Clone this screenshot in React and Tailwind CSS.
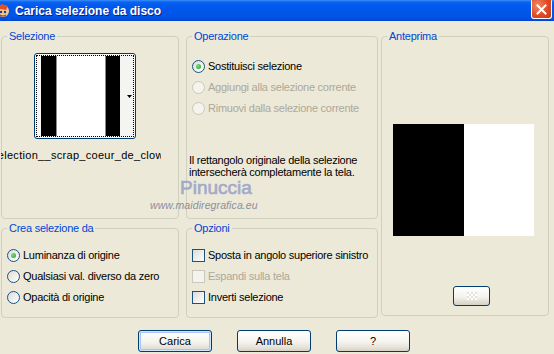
import React from 'react'

const font = "font-['Liberation_Sans',Arial,sans-serif]"

function Radio({ checked, disabled }) {
  return (
    <span
      className={
        disabled
          ? 'w-[13px] h-[13px] rounded-full border border-[#CAC8BB] bg-[#F5F4EC] flex items-center justify-center shrink-0'
          : 'w-[13px] h-[13px] rounded-full border border-[#1C5180] bg-[linear-gradient(135deg,#DCDCD7,#FFFFFF)] flex items-center justify-center shrink-0'
      }
    >
      {checked && (
        <span className="w-[5px] h-[5px] rounded-full bg-[radial-gradient(circle_at_35%_35%,#7BE07E,#21A121)]" />
      )}
    </span>
  )
}

function Check({ disabled }) {
  return (
    <span
      className={
        disabled
          ? 'w-[13px] h-[13px] border border-[#CAC8BB] bg-[#F5F4EC] shrink-0'
          : 'w-[13px] h-[13px] border border-[#1C5180] bg-[linear-gradient(135deg,#DCDCD7,#FFFFFF)] shrink-0'
      }
    />
  )
}

function Row({ control, label, disabled }) {
  return (
    <div className="h-[21px] flex items-center">
      {control}
      <span className={`ml-[3px] tracking-[-0.25px] ${disabled ? 'text-[#ACA899]' : 'text-black'}`}>{label}</span>
    </div>
  )
}

function Group({ title, className, children }) {
  return (
    <div className={`relative border border-[#D0D0BF] rounded-[4px] ${className}`}>
      <span className="absolute -top-[7px] left-[5px] px-[2px] bg-[#ECE9D8] text-[#0046D5] leading-[13px] tracking-[-0.25px]">
        {title}
      </span>
      {children}
    </div>
  )
}

function Btn({ children, isDefault, className }) {
  return (
    <button
      className={`h-[22px] border border-[#003C74] rounded-[3px] bg-[linear-gradient(#FFFFFF,#F4F3EE_55%,#E3E0D6_85%,#D6D0C5)] text-black leading-none flex items-center justify-center ${
        isDefault ? 'shadow-[inset_0_0_0_1px_#CEE7FF,inset_0_0_0_2px_#A8C4F0]' : ''
      } ${className}`}
    >
      {children}
    </button>
  )
}

function TitleIcon() {
  return (
    <svg width="16" height="16" viewBox="0 0 16 16" className="-ml-[6px] shrink-0">
      <circle cx="9" cy="8" r="6" fill="#F6C88A" />
      <path d="M3 4 L8 1 L14 3 L12 7 L6 6 Z" fill="#E0502A" />
      <circle cx="7" cy="9" r="1.2" fill="#1A3A8A" />
      <circle cx="11" cy="9" r="1.2" fill="#1A3A8A" />
      <path d="M6 12 Q9 14 12 12" stroke="#C0302A" strokeWidth="1.2" fill="none" />
      <path d="M2 13 L5 15 L4 11 Z" fill="#3FA33F" />
    </svg>
  )
}

export default function App() {
  return (
    <div className={`w-[554px] h-[354px] overflow-hidden bg-[#ECE9D8] text-[11px] ${font} relative`}>
      {/* title bar */}
      <div className="h-[21px] flex items-start bg-[linear-gradient(180deg,#3D8DF9_0%,#0863F0_10%,#0058EE_30%,#0055E7_70%,#0050E0_90%,#0042CF_100%)]">
        <div className="h-full flex items-center">
          <TitleIcon />
          <span className="ml-[5px] text-white font-bold text-[12px] [text-shadow:1px_1px_0_#0A1E8C]">
            Carica selezione da disco
          </span>
        </div>
        <div className="ml-auto mr-[2px] w-[21px] h-[19px] rounded-b-[3px] rounded-t-[1px] border border-white border-t-0 bg-[radial-gradient(circle_at_30%_30%,#F08A6A,#E04A25_55%,#C83A18)] flex items-center justify-center">
          <svg width="11" height="11" viewBox="0 0 11 11">
            <path d="M1.5 1.5 L9.5 9.5 M9.5 1.5 L1.5 9.5" stroke="#FFFFFF" strokeWidth="2" strokeLinecap="square" />
          </svg>
        </div>
      </div>

      {/* body */}
      <div className="flex pt-[15px] pl-[1px]">
        <div className="w-[178px] flex flex-col gap-[9px]">
          <Group title="Selezione" className="h-[183px]">
            <div className="pt-[16px] pl-[32px]">
              <div className="w-[102px] h-[86px] border border-[#003C74] rounded-[3px] bg-[#F7F7F4] p-[1px]">
                <div className="h-full border border-dotted border-black flex pl-[4px]">
                  <div className="w-[15px] bg-black" />
                  <div className="w-[1px] bg-[#8A8A8A]" />
                  <div className="w-[48px] bg-white" />
                  <div className="w-[1px] bg-[#8A8A8A]" />
                  <div className="w-[14px] bg-black" />
                  <div className="flex-1 bg-[#F4F4F2] flex items-center justify-end pr-[1px]">
                    <svg width="5" height="3" viewBox="0 0 5 3">
                      <path d="M0 0 H5 L2.5 3 Z" fill="#000" />
                    </svg>
                  </div>
                </div>
              </div>
            </div>
            <div className="mt-[10px] -ml-[1px] w-[160px] overflow-hidden flex justify-center">
              <span className="whitespace-nowrap leading-[13px] tracking-[0.3px]">selection__scrap_coeur_de_clown</span>
            </div>
          </Group>
          <Group title="Crea selezione da" className="h-[90px]">
            <div className="pt-[16px] pl-[5px]">
              <Row control={<Radio checked />} label="Luminanza di origine" />
              <Row control={<Radio />} label="Qualsiasi val. diverso da zero" />
              <Row control={<Radio />} label="Opacità di origine" />
            </div>
          </Group>
        </div>

        <div className="w-[192px] ml-[7px] flex flex-col gap-[9px]">
          <Group title="Operazione" className="h-[183px]">
            <div className="pt-[19px] pl-[5px]">
              <Row control={<Radio checked />} label="Sostituisci selezione" />
              <Row control={<Radio disabled />} label="Aggiungi alla selezione corrente" disabled />
              <Row control={<Radio disabled />} label="Rimuovi dalla selezione corrente" disabled />
            </div>
            <p className="mt-[35px] pl-[2px] leading-[12px] tracking-[-0.25px]">
              Il rettangolo originale della selezione
              <br />
              intersecherà completamente la tela.
            </p>
          </Group>
          <Group title="Opzioni" className="h-[90px]">
            <div className="pt-[16px] pl-[5px]">
              <Row control={<Check />} label="Sposta in angolo superiore sinistro" />
              <Row control={<Check disabled />} label="Espandi sulla tela" disabled />
              <Row control={<Check />} label="Inverti selezione" />
            </div>
          </Group>
        </div>

        <div className="w-[168px] ml-[3px]">
          <Group title="Anteprima" className="h-[280px]">
            <div className="pt-[87px] pl-[11px]">
              <div className="flex h-[112px]">
                <div className="w-[71px] bg-black" />
                <div className="w-[70px] bg-white" />
              </div>
            </div>
            <div className="mt-[50px] ml-[71px] w-[37px] h-[20px] border border-[#003C74] rounded-[3px] bg-[linear-gradient(#FFFFFF,#F4F3EE_55%,#D6D0C5)] flex items-center justify-center">
              <div className="w-[10px] h-[8px] bg-[repeating-conic-gradient(#FFFFFF_0_25%,#E4E2DA_0_50%)] bg-[length:4px_4px]" />
            </div>
          </Group>
        </div>
      </div>

      {/* buttons */}
      <div className="flex pl-[138px] gap-[25px] mt-[12px]">
        <Btn isDefault className="w-[74px]">Carica</Btn>
        <Btn className="w-[74px]">Annulla</Btn>
        <Btn className="w-[74px]">?</Btn>
      </div>

      {/* watermark */}
      <div className="absolute left-[150px] top-[177px] flex flex-col pointer-events-none">
        <span className="ml-[30px] text-[19px] leading-[21px] text-[#A3AAC8] [-webkit-text-stroke:0.6px_#A3AAC8]">Pinuccia</span>
        <span className="mt-[1px] text-[10.5px] leading-[12px] italic text-[#8D8D9C] tracking-[0.1px]">www.maidiregrafica.eu</span>
      </div>
    </div>
  )
}
